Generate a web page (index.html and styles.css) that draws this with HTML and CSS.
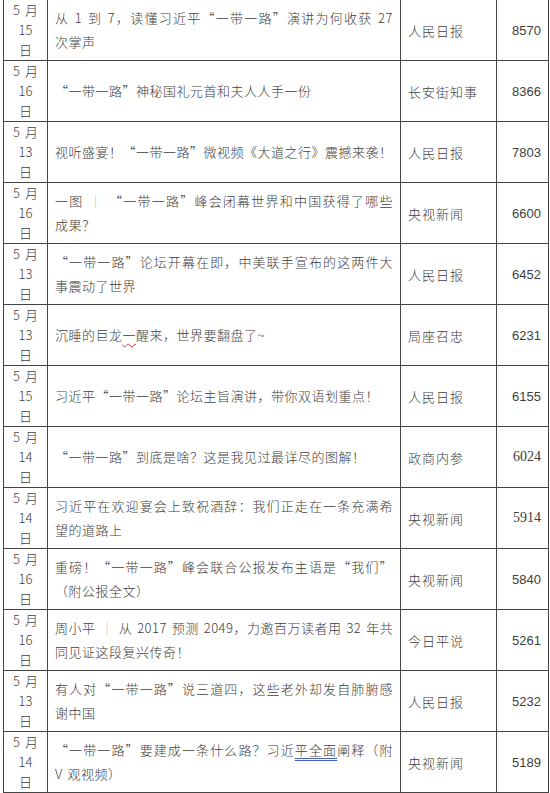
FILE: index.html
```html
<!DOCTYPE html>
<html lang="zh-CN">
<head>
<meta charset="utf-8">
<title>一带一路 文章阅读量</title>
<link rel="stylesheet" href="styles.css">
</head>
<body>
<table class="tbl">
  <colgroup>
    <col class="c-date"><col class="c-title"><col class="c-src"><col class="c-num">
  </colgroup>
  <tbody>
    <tr><td class="date">5 月<br>15<br>日</td><td class="title"><span class="l1">从 1 到 7，读懂习近平“一带一路”演讲为何收获 27</span>次掌声</td><td class="src">人民日报</td><td class="num">8570</td></tr>
    <tr><td class="date">5 月<br>16<br>日</td><td class="title">“一带一路”神秘国礼元首和夫人人手一份</td><td class="src">长安街知事</td><td class="num">8366</td></tr>
    <tr><td class="date">5 月<br>13<br>日</td><td class="title">视听盛宴！“一带一路”微视频《大道之行》震撼来袭！</td><td class="src">人民日报</td><td class="num">7803</td></tr>
    <tr><td class="date">5 月<br>16<br>日</td><td class="title"><span class="l1">一图 <span class="bar">｜</span> “一带一路”峰会闭幕世界和中国获得了哪些</span>成果？</td><td class="src">央视新闻</td><td class="num">6600</td></tr>
    <tr><td class="date">5 月<br>13<br>日</td><td class="title"><span class="l1">“一带一路”论坛开幕在即，中美联手宣布的这两件大</span>事震动了世界</td><td class="src">人民日报</td><td class="num">6452</td></tr>
    <tr><td class="date">5 月<br>13<br>日</td><td class="title">沉睡的巨龙<span class="sp-red">一</span>醒来，世界要翻盘了~</td><td class="src">局座召忠</td><td class="num">6231</td></tr>
    <tr><td class="date">5 月<br>15<br>日</td><td class="title">习近平“一带一路”论坛主旨演讲，带你双语划重点！</td><td class="src">人民日报</td><td class="num">6155</td></tr>
    <tr><td class="date">5 月<br>14<br>日</td><td class="title">“一带一路”到底是啥？这是我见过最详尽的图解！</td><td class="src">政商内参</td><td class="num serif">6024</td></tr>
    <tr><td class="date">5 月<br>14<br>日</td><td class="title"><span class="l1">习近平在欢迎宴会上致祝酒辞：我们正走在一条充满希</span>望的道路上</td><td class="src">央视新闻</td><td class="num serif">5914</td></tr>
    <tr><td class="date">5 月<br>16<br>日</td><td class="title"><span class="l1">重磅！“一带一路”峰会联合公报发布主语是“我们”</span>（附公报全文）</td><td class="src">央视新闻</td><td class="num">5840</td></tr>
    <tr><td class="date">5 月<br>16<br>日</td><td class="title"><span class="l1">周小平 <span class="bar">｜</span> 从 2017 预测 2049，力邀百万读者用 32 年共</span>同见证这段复兴传奇！</td><td class="src">今日平说</td><td class="num">5261</td></tr>
    <tr><td class="date">5 月<br>13<br>日</td><td class="title"><span class="l1">有人对“一带一路”说三道四，这些老外却发自肺腑感</span>谢中国</td><td class="src">人民日报</td><td class="num">5232</td></tr>
    <tr><td class="date">5 月<br>14<br>日</td><td class="title"><span class="l1">“一带一路”要建成一条什么路？习近<span class="sp-blue">平全面</span>阐释（附</span>V 观视频）</td><td class="src">央视新闻</td><td class="num">5189</td></tr>
  </tbody>
</table>
</body>
</html>
```

FILE: styles.css
```css
html, body {
  margin: 0;
  padding: 0;
  background: #ffffff;
}

body {
  font-family: "Noto Sans CJK SC", "Liberation Sans", sans-serif;
  font-weight: 300;
  color: #404040;
}

.tbl {
  border-collapse: separate;
  border-spacing: 0;
  table-layout: fixed;
  width: 546px;
  margin-left: 3px;
  border-left: 1px solid #444444;
}

.c-date { width: 44px; }
.c-title { width: 353px; }
.c-src { width: 96px; }
.c-num { width: 52px; }

.tbl td {
  box-sizing: border-box;
  height: 61px;
  padding: 0;
  border-right: 1px solid #444444;
  border-bottom: 1px solid #444444;
  vertical-align: middle;
  font-size: 13px;
}

.tbl td.date {
  text-align: center;
  line-height: 20px;
  white-space: nowrap;
  word-spacing: 2px;
}

.tbl td.title {
  padding: 0 7px;
  line-height: 24px;
  letter-spacing: 0.5px;
  word-spacing: 1.5px;
  white-space: nowrap;
}

.tbl td.title .l1 {
  display: block;
  text-align: justify;
  text-align-last: justify;
  text-justify: inter-character;
}

.tbl td.src {
  padding-left: 7px;
  letter-spacing: 1px;
  white-space: nowrap;
}

.tbl td.num {
  text-align: right;
  padding-right: 7px;
  font-family: "Liberation Sans", sans-serif;
  font-weight: 400;
  font-size: 13px;
}

.tbl td.num.serif {
  font-family: "Liberation Serif", serif;
  font-size: 14px;
}

.bar {
  color: #b4b4b4;
}

.sp-red {
  text-decoration: underline wavy #d04040;
  text-decoration-thickness: 1px;
  text-underline-offset: 3px;
}

.sp-blue {
  text-decoration: underline double #4a62c8;
  text-decoration-thickness: 1px;
  text-underline-offset: 3px;
}
```
